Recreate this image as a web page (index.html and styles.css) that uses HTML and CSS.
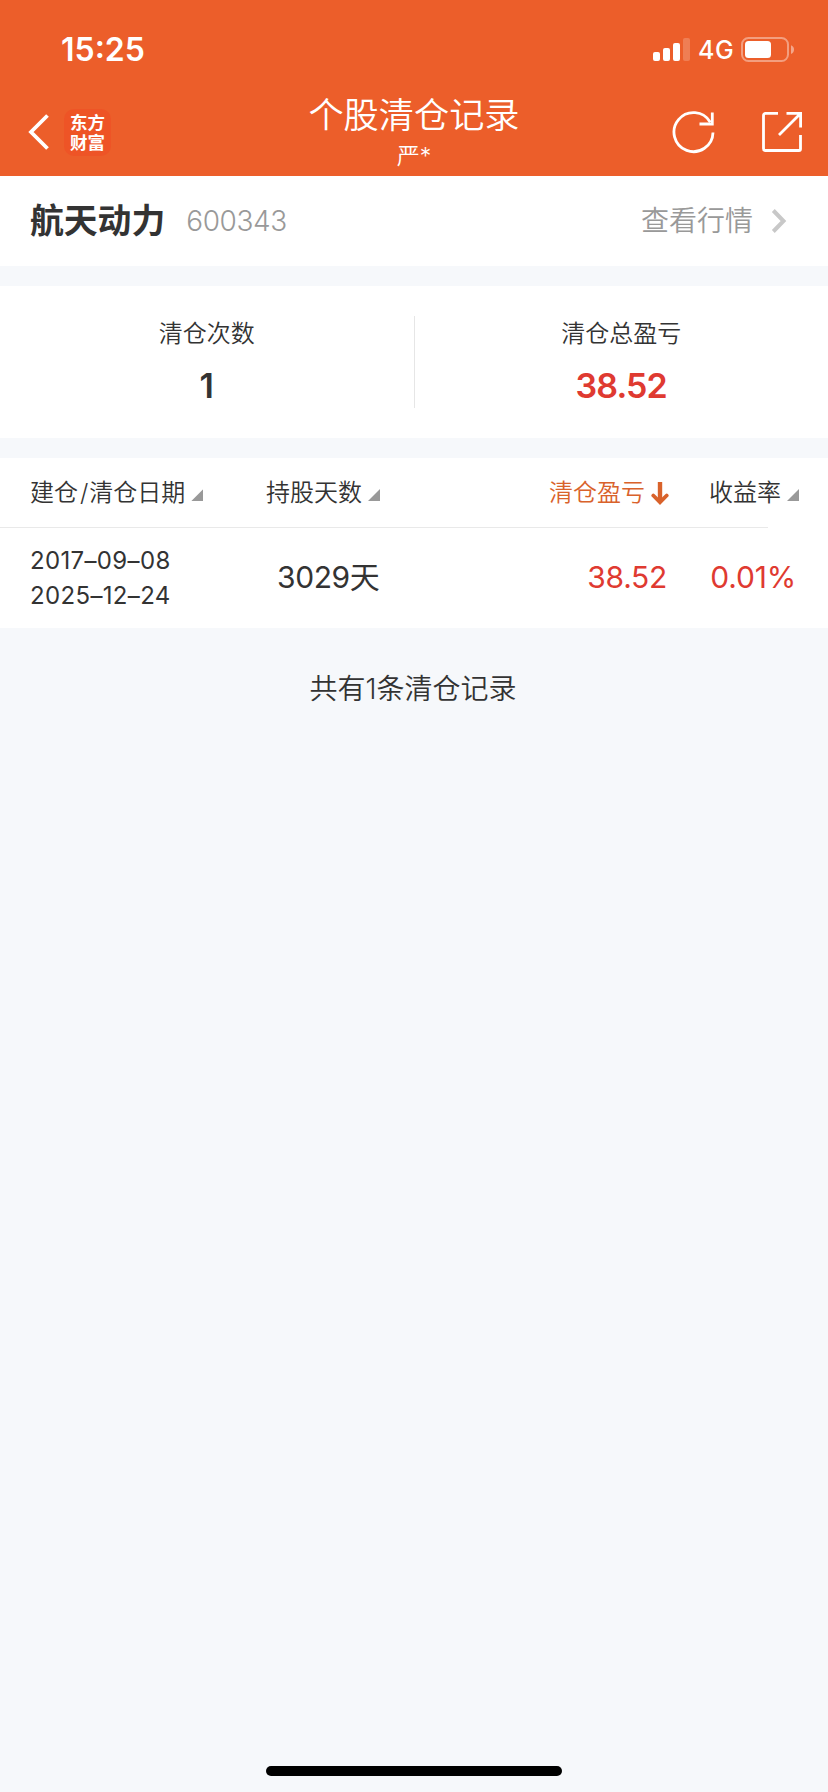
FILE: index.html
```
<!DOCTYPE html>
<html lang="zh-CN">
<head>
<meta charset="utf-8">
<title>个股清仓记录</title>
<link rel="stylesheet" href="styles.css">
</head>
<body>
<div class="screen">
  <header class="header">
    <div class="status">
      <span class="time">15:25</span>
      <div class="indicators">
        <svg class="signal" width="38" height="24" viewBox="0 0 38 24" fill="#fff">
          <rect x="0" y="14" width="7" height="9" rx="2"/>
          <rect x="10" y="10" width="7" height="13" rx="2"/>
          <rect x="20" y="5" width="7" height="18" rx="2"/>
          <rect x="30" y="0" width="7" height="23" rx="2" opacity=".2"/>
        </svg>
        <span class="network">4G</span>
        <svg class="battery" width="54" height="26" viewBox="0 0 54 26">
          <rect x="1" y="1" width="46" height="23" rx="6.5" fill="none" stroke="#fff" stroke-opacity=".4" stroke-width="2"/>
          <rect x="4" y="4" width="26" height="17" rx="3.5" fill="#fff"/>
          <path d="M50 8.3Q53 9.5 53 12.6T50 17Z" fill="#fff" fill-opacity=".45"/>
        </svg>
      </div>
    </div>
    <nav class="nav">
      <div class="nav-left">
        <svg width="22" height="38" viewBox="0 0 22 38" fill="none" stroke="#fff" stroke-width="3.8"><path d="M19.500 2.500L3 19l16.500 16.500"/></svg>
        <div class="logo"><span>东方</span><span>财富</span></div>
      </div>
      <div class="nav-title">
        <h1>个股清仓记录</h1>
        <span class="account">严*</span>
      </div>
      <div class="nav-right">
        <svg width="44" height="44" viewBox="0 0 44 44" fill="none" stroke="#fff" stroke-width="2.800"><path d="M41 22.500A19.500 19.500 0 1 1 38.300 12.200"/><path d="M40.300 2.500V14H27.500"/></svg>
        <svg width="44" height="44" viewBox="0 0 44 44" fill="none" stroke="#fff" stroke-width="2.800"><path d="M18 3.400H5.500a2 2 0 0 0-2 2V38.500a2 2 0 0 0 2 2H39a1.500 1.500 0 0 0 1.500-1.500V25"/><path d="M26.500 3.400H40.600V17.500M40 4L19 25"/></svg>
      </div>
    </nav>
  </header>

  <section class="stock">
    <h2>航天动力</h2>
    <span class="code">600343</span>
    <span class="quote">查看行情</span>
    <svg width="16" height="24" viewBox="0 0 16 24" fill="none" stroke="#c8c8c8" stroke-width="4"><path d="M2.300 1.500L12.500 12 2.300 22.500"/></svg>
  </section>

  <section class="summary">
    <div class="stat"><span class="label">清仓次数</span><strong>1</strong></div>
    <div class="divider"></div>
    <div class="stat"><span class="label">清仓总盈亏</span><strong class="gain">38.52</strong></div>
  </section>

  <section class="records">
    <div class="row head">
      <div class="date">建仓<span class="slash">/</span>清仓日期<i class="sort"></i></div>
      <div class="days">持股天数<i class="sort"></i></div>
      <div class="profit">清仓盈亏<svg width="18" height="24" viewBox="0 0 18 24" fill="none" stroke="#d9622b" stroke-width="4.400"><path d="M9 1V20"/><path d="M2.300 14.500L9 21.200l6.700-6.700" stroke-width="3.800" stroke-linecap="round"/></svg></div>
      <div class="rate">收益率<i class="sort"></i></div>
    </div>
    <div class="row body">
      <div class="date"><span>2017–09–08</span><span>2025–12–24</span></div>
      <div class="days">3029天</div>
      <div class="profit">38.52</div>
      <div class="rate">0.01%</div>
    </div>
  </section>

  <p class="total">共有1条清仓记录</p>
  <div class="home"></div>
</div>
</body>
</html>
```
FILE: styles.css
```
* { box-sizing: border-box; }
body { margin: 0; }
h1, h2, p { margin: 0; font-weight: inherit; }
svg { display: block; flex: none; }

.screen {
  width: 828px;
  height: 1792px;
  display: flex;
  flex-direction: column;
  background: #f6f8fb;
  color: #333;
  font-family: Inter, "Noto Sans CJK SC", sans-serif;
  white-space: nowrap;
}

.header { height: 176px; background: #ec5e2a; color: #fff; }
.status {
  height: 88px;
  padding: 12px 33px 0 61px;
  display: flex;
  justify-content: space-between;
  align-items: center;
}
.time { font-size: 32px; font-weight: 600; line-height: 40px; }
.indicators { display: flex; align-items: center; }
.network { margin-left: 7px; width: 43px; font-size: 25px; font-weight: 450; letter-spacing: .6px; line-height: 30px; }
.nav { height: 88px; display: grid; grid-template-columns: 207px 414px 207px; }
.nav-left { display: flex; align-items: center; padding-left: 28px; gap: 14px; }
.logo {
  width: 47px;
  height: 47px;
  padding-top: 3px;
  border-radius: 10px;
  background: #ee5426;
  font-family: "Noto Sans CJK SC", sans-serif;
  font-size: 17.500px;
  font-weight: 700;
  line-height: 20px;
  text-align: center;
}
.logo span { display: block; }
.nav-title { display: flex; flex-direction: column; align-items: center; }
.nav-title h1 { padding-top: 4px; font-size: 35.200px; font-weight: 350; line-height: 46px; }
.account { font-size: 23px; font-weight: 350; line-height: 36px; }
.nav-right { display: flex; align-items: center; justify-content: flex-end; gap: 44px; padding-right: 24px; }

.stock { height: 90px; padding: 0 41px 0 30px; display: flex; align-items: center; background: #fff; }
.stock h2 { font-size: 33.800px; font-weight: 700; line-height: 44px; }
.code { margin-left: 21px; font-size: 28px; font-weight: 300; letter-spacing: -.4px; color: #999; }
.quote { margin-left: auto; margin-right: 18px; font-size: 28px; font-weight: 350; line-height: 36px; color: #999; }

.summary { height: 152px; margin-top: 20px; display: flex; align-items: center; background: #fff; }
.stat { flex: 1; display: flex; flex-direction: column; align-items: center; }
.label { font-size: 24px; line-height: 36px; font-weight: 350; }
.stat strong { margin-top: 12px; font-size: 34px; font-weight: 600; line-height: 44px; }
.divider { width: 1px; height: 92px; background: #e6e6e6; }
.stat .gain { color: #df3a31; font-weight: 570; letter-spacing: -.9px; }

.records { margin-top: 20px; background: #fff; }
.row { display: grid; grid-template-columns: 236px 200px 205px 128px; padding-left: 30px; align-items: center; }
.row > div { display: flex; align-items: center; }
.head { height: 70px; grid-template-rows: 69px 1px; font-size: 24px; font-weight: 350; line-height: 36px; }
.head::after { content: ""; width: 768px; height: 1px; margin-left: -30px; grid-column: 1 / -1; background: #e9e9e9; }
.slash { padding: 0 1px 0 2px; }
.sort { margin: 5px 0 0 6px; width: 12px; height: 12px; background: #999; clip-path: polygon(100% 0, 100% 100%, 0 100%); }
.row .profit, .row .rate { justify-content: flex-end; }
.head .profit { color: #d9622b; }
.head .profit svg { margin: 0 2px 0 6px; }
.body { height: 100px; font-size: 30px; line-height: 40px; }
.body .date { flex-direction: column; align-items: flex-start; font-size: 24px; font-weight: 370; line-height: 35px; letter-spacing: .35px; }
.body .days { padding: 0 0 2px 11px; font-weight: 370; letter-spacing: -.4px; }
.body .profit { padding: 0 4px 2px 0; color: #df3a31; font-weight: 380; letter-spacing: -.3px; }
.body .rate { padding: 0 3px 2px 0; color: #df3a31; font-weight: 380; letter-spacing: -.2px; }

.total { margin-top: 41px; padding-right: 2px; text-align: center; font-size: 28px; line-height: 40px; font-weight: 350; }
.home { width: 296px; height: 10px; margin: auto auto 16px; border-radius: 5px; background: #000; }
```
